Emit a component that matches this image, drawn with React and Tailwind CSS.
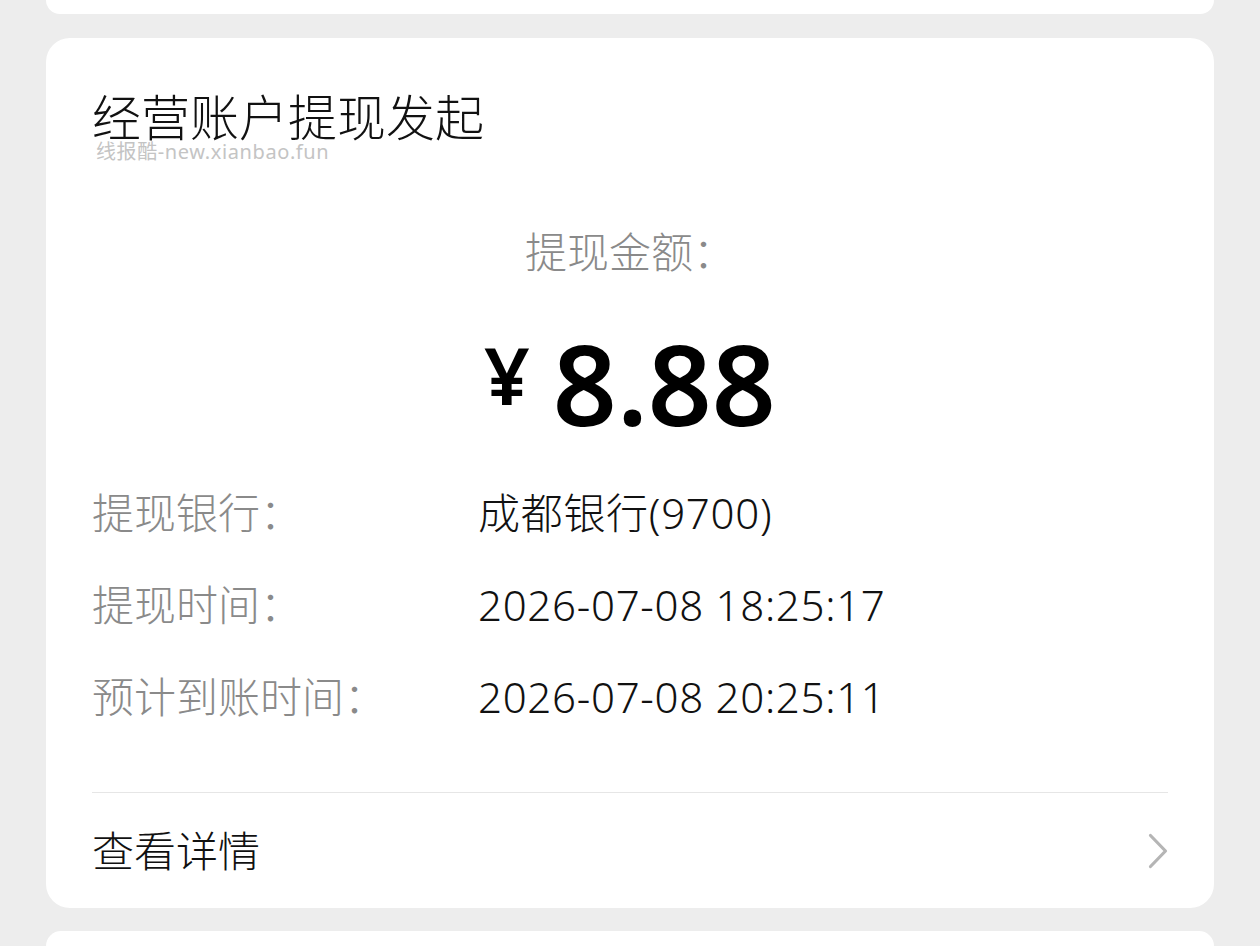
import React from "react";

const font = { fontFamily: '"Noto Sans", "Noto Sans CJK SC", sans-serif' };

function Chevron() {
  return (
    <svg width="20" height="36" viewBox="0 0 20 36" fill="none">
      <path d="M2.5 2.5 L17.5 18 L2.5 33.5" stroke="#b5b5b5" strokeWidth="3.2" strokeLinecap="round" strokeLinejoin="round" />
    </svg>
  );
}

function Row({ label, value }) {
  return (
    <div className="flex h-[92px] items-center text-[42px] leading-[42px]">
      <div className="w-[386px] shrink-0 text-[#8a8a8a]">{label}</div>
      <div className="tracking-[0.7px] text-[#111111]">{value}</div>
    </div>
  );
}

export default function App() {
  return (
    <div className="flex h-[946px] flex-col overflow-hidden bg-[#ededed] px-[46px] font-light" style={font}>
      <div className="h-[14px] shrink-0 rounded-b-[24px] bg-white" />

      <div className="mt-[24px] flex h-[870px] shrink-0 flex-col rounded-[24px] bg-white px-[46px] pt-[56px]">
        <div className="text-[49px] leading-[46px] text-[#111111]">经营账户提现发起</div>
        <div className="mt-[2px] pl-[4px] text-[20px] font-normal leading-[20px] tracking-[0.6px] text-[#c4c4c4]">线报酷-new.xianbao.fun</div>

        <div className="mt-[69px] text-center text-[42px] leading-[42px] text-[#8a8a8a]">提现金额：</div>

        <div className="mt-[52px] flex items-start justify-center font-semibold text-[#000000]">
          <span className="mt-[9px] mr-[23px] text-[80px] leading-[80px]">¥</span>
          <span className="text-[112px] leading-[116px]">8.88</span>
        </div>

        <div className="mt-[26px] flex flex-col">
          <Row label="提现银行：" value="成都银行(9700)" />
          <Row label="提现时间：" value="2026-07-08 18:25:17" />
          <Row label="预计到账时间：" value="2026-07-08 20:25:11" />
        </div>

        <div className="mt-[49px] h-px bg-[#e6e6e6]" />

        <div className="flex flex-1 items-center justify-between">
          <span className="text-[42px] leading-[42px] text-[#111111]">查看详情</span>
          <Chevron />
        </div>
      </div>

      <div className="mt-[23px] flex-1 rounded-t-[24px] bg-white" />
    </div>
  );
}
